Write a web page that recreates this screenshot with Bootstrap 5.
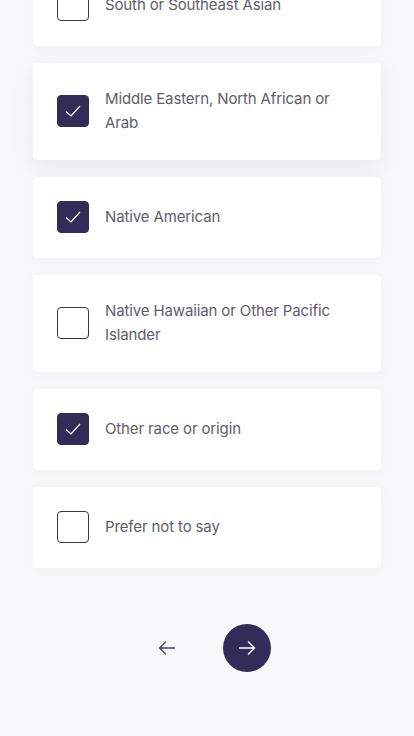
<!doctype html>
<html lang="en"><head><meta charset="utf-8"><title>Survey</title>
<link href="https://cdn.jsdelivr.net/npm/bootstrap@5.3.0/dist/css/bootstrap.min.css" rel="stylesheet">
<style>
html,body{height:736px;overflow:hidden}
body{background:#f8f8fb;font-family:"Inter","Noto Sans",sans-serif;color:#5f5d69}
.opt-list{margin:-35.5px 33px 0 33px;gap:17px}
.opt-card{padding:23.5px 23px;gap:16px;background:#fff;border:1px solid #fff;border-radius:4px;box-shadow:0 2px 14px rgba(40,40,70,.035)}
.opt-card.raised{box-shadow:0 8px 26px rgba(40,40,70,.075)}
.opt-box{width:32px;height:32px;flex:none;border:1px solid #37373f;border-radius:4px;background:#fff;display:flex;align-items:center;justify-content:center}
.opt-box.on{background:#322d58;border-color:#322d58}
.opt-label{font-size:15px;line-height:24px;letter-spacing:-.13px}
.pager{margin-top:56.5px;gap:32px}
.nav-back,.nav-next{width:48px;height:48px;padding:0;border:0;border-radius:50%;display:flex;align-items:center;justify-content:center;background:transparent}
.nav-next{background:#322d58}
</style></head><body>
<div class="d-flex flex-column opt-list">
<div class="d-flex align-items-center opt-card"><span class="opt-box"></span><span class="opt-label">South or Southeast Asian</span></div>
<div class="d-flex align-items-center opt-card raised"><span class="opt-box on"><svg width="16" height="12" viewBox="0 0 16 12" fill="none" stroke="#fff" stroke-width="1.2"><path d="M1 6.5l5 4.5 9-10"/></svg></span><span class="opt-label">Middle Eastern, North African or Arab</span></div>
<div class="d-flex align-items-center opt-card"><span class="opt-box on"><svg width="16" height="12" viewBox="0 0 16 12" fill="none" stroke="#fff" stroke-width="1.2"><path d="M1 6.5l5 4.5 9-10"/></svg></span><span class="opt-label">Native American</span></div>
<div class="d-flex align-items-center opt-card"><span class="opt-box"></span><span class="opt-label">Native Hawaiian or Other Pacific Islander</span></div>
<div class="d-flex align-items-center opt-card"><span class="opt-box on"><svg width="16" height="12" viewBox="0 0 16 12" fill="none" stroke="#fff" stroke-width="1.2"><path d="M1 6.5l5 4.5 9-10"/></svg></span><span class="opt-label">Other race or origin</span></div>
<div class="d-flex align-items-center opt-card"><span class="opt-box"></span><span class="opt-label">Prefer not to say</span></div>
</div>
<div class="d-flex justify-content-center pager">
<button class="nav-back" aria-label="Back"><svg width="18" height="16" viewBox="0 0 18 16" fill="none" stroke="#47435f" stroke-width="1.3"><path d="M17 8H1.5M8 1.5L1.5 8 8 14.5"/></svg></button>
<button class="nav-next" aria-label="Next"><svg width="18" height="16" viewBox="0 0 18 16" fill="none" stroke="#fff" stroke-width="1.3"><path d="M1 8h15.5M10 1.5L16.5 8 10 14.5"/></svg></button>
</div>
</body></html>
